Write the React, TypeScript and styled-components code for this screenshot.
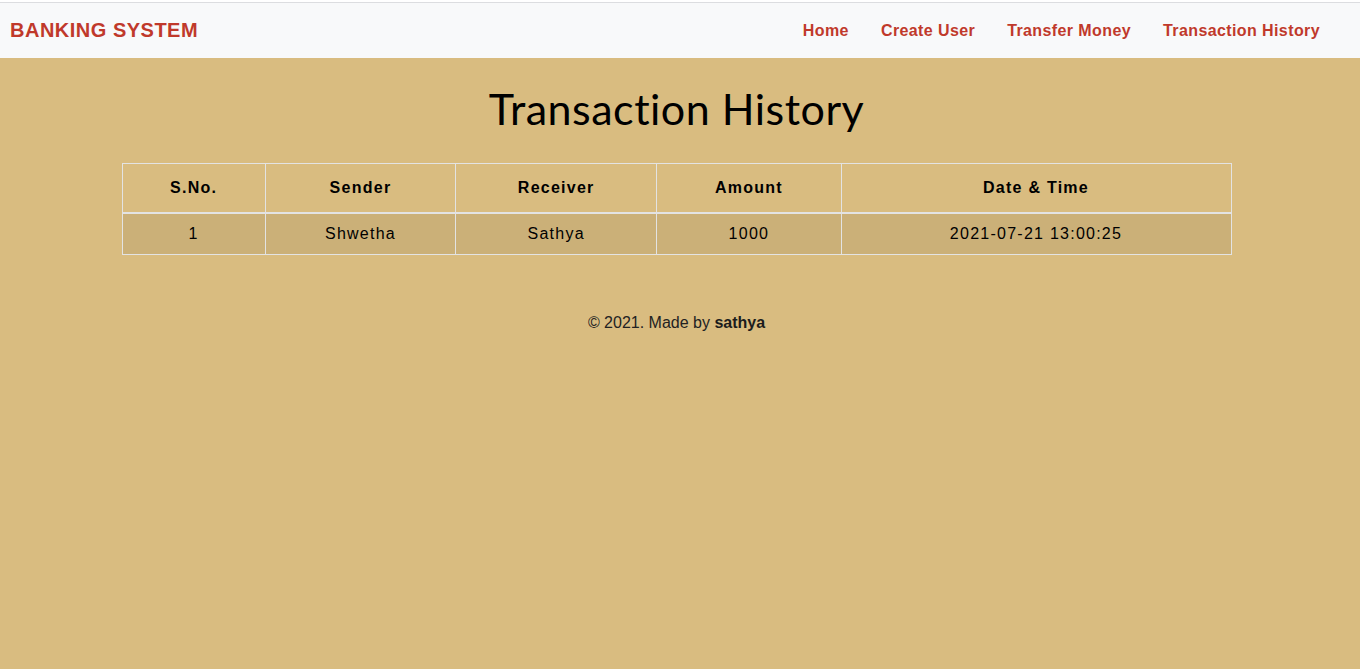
import React from "react";
import styled, { createGlobalStyle } from "styled-components";

const Global = createGlobalStyle`
  html, body { margin: 0; padding: 0; }
  body {
    background: #d9bc80;
    font-family: "Liberation Sans", Arial, sans-serif;
    color: #212529;
    min-height: 669px;
  }
`;

const Page = styled.div`
  padding-top: 2px;
  background: #d9bc80;
  min-height: 667px;
  box-shadow: inset 0 2px 0 #ffffff;
`;

const Nav = styled.nav`
  height: 55px;
  border-top: 1px solid #dcdde0;
  background: #f8f9fa;
  display: flex;
  align-items: center;
  justify-content: space-between;
  padding: 0 24px 0 10px;
`;

const Brand = styled.a`
  font-size: 20px;
  font-weight: 700;
  color: #c0392b;
  letter-spacing: 0.5px;
  text-decoration: none;
`;

const Links = styled.ul`
  display: flex;
  list-style: none;
  margin: 0;
  padding: 0;
`;

const LinkItem = styled.li`
  padding: 0 16px;
  font-size: 16px;
  font-weight: 700;
  color: #c0392b;
  letter-spacing: 0.4px;
`;

const Main = styled.main`
  display: flex;
  flex-direction: column;
  align-items: center;
  padding-right: 7px;
`;

const Title = styled.h1`
  margin: 26px 0 0;
  font-family: Lato, "Noto Sans", sans-serif;
  font-weight: 400;
  font-size: 43px;
  line-height: 50px;
  color: #000;
  letter-spacing: 0.5px;
`;

const Table = styled.table`
  margin-top: 29px;
  width: 1110px;
  border-collapse: collapse;
  color: #000;
  letter-spacing: 1.25px;
  font-size: 16px;
`;

const Th = styled.th<{ w: number }>`
  width: ${(p) => p.w}px;
  height: 48px;
  border: 1px solid #e3e3e3;
  border-bottom-width: 2px;
  font-weight: 700;
  padding: 0;
  text-align: center;
`;

const Row = styled.tr`
  background: #cbb078;
`;

const Td = styled.td`
  height: 40px;
  border: 1px solid #e3e3e3;
  padding: 0;
  text-align: center;
`;

const Footer = styled.footer`
  margin-top: 59px;
  font-size: 16px;
  color: #222;
  & b { color: #1c1c1c; }
`;

const cols = [
  { label: "S.No.", w: 143 },
  { label: "Sender", w: 190 },
  { label: "Receiver", w: 201 },
  { label: "Amount", w: 184 },
  { label: "Date & Time", w: 391 },
];

const rows = [["1", "Shwetha", "Sathya", "1000", "2021-07-21 13:00:25"]];

export default function App() {
  return (
    <Page>
      <Global />
      <Nav>
        <Brand>BANKING SYSTEM</Brand>
        <Links>
          {["Home", "Create User", "Transfer Money", "Transaction History"].map((l) => (
            <LinkItem key={l}>{l}</LinkItem>
          ))}
        </Links>
      </Nav>
      <Main>
        <Title>Transaction History</Title>
        <Table>
          <thead>
            <tr>
              {cols.map((c) => (
                <Th key={c.label} w={c.w}>{c.label}</Th>
              ))}
            </tr>
          </thead>
          <tbody>
            {rows.map((r, i) => (
              <Row key={i}>
                {r.map((v, j) => (
                  <Td key={j}>{v}</Td>
                ))}
              </Row>
            ))}
          </tbody>
        </Table>
        <Footer>
          © 2021. Made by <b>sathya</b>
        </Footer>
      </Main>
    </Page>
  );
}
